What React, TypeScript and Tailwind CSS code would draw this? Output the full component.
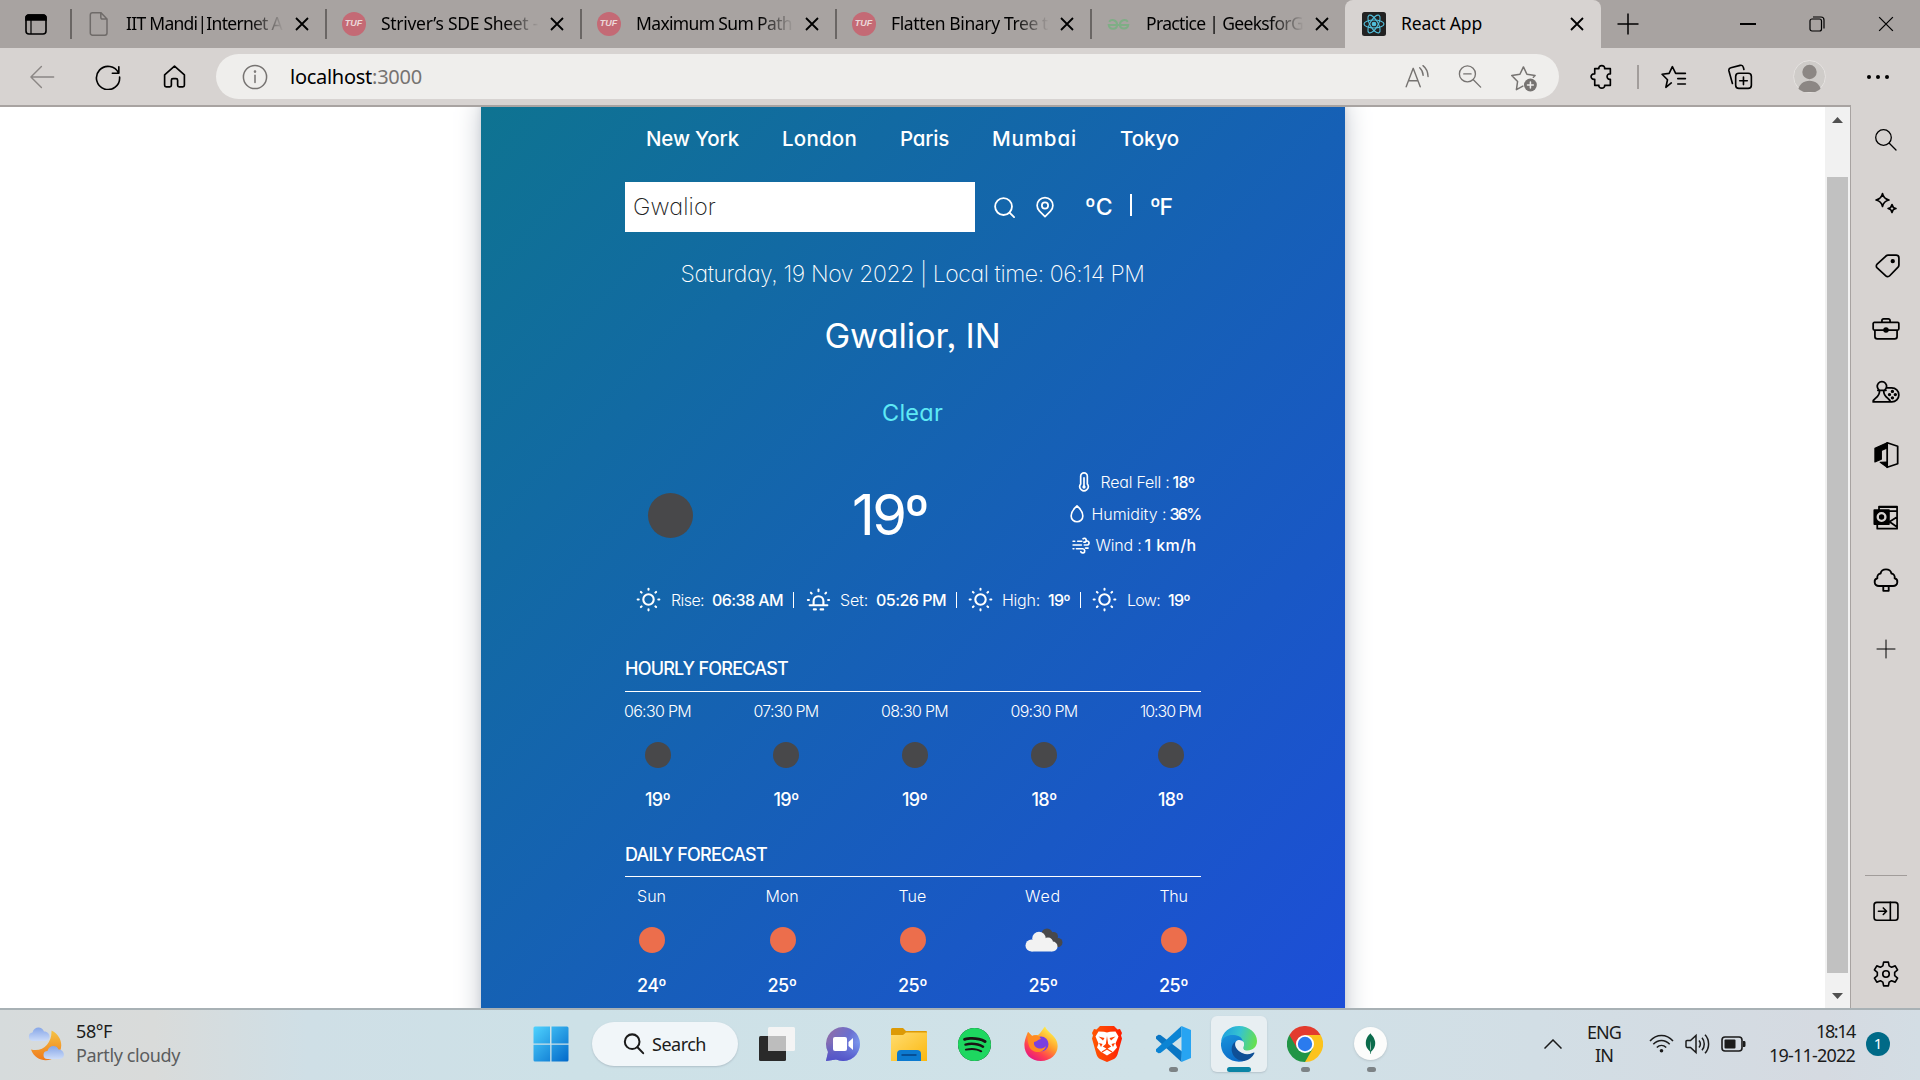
import React, { useLayoutEffect, useRef, useState } from "react";
import { SiSpotify, SiMongodb } from "react-icons/si";

/** Single line of text whose letter spacing is adjusted to fill `w` pixels. */
function Label({ w, className = "", children }: { w: number; className?: string; children: string }) {
  const ref = useRef<HTMLSpanElement>(null);
  const [spacing, setSpacing] = useState(0);
  useLayoutEffect(() => {
    const natural = ref.current!.getBoundingClientRect().width;
    setSpacing((w - natural) / children.length);
  }, [w, children]);
  return (
    <span ref={ref} className={`inline-block shrink-0 whitespace-pre ${className}`} style={{ letterSpacing: `${spacing}px` }}>
      {children}
    </span>
  );
}

type IconProps = { size?: number; className?: string; sw?: number; children: React.ReactNode };
function Icon({ size = 24, className = "", sw = 1.4, children }: IconProps) {
  return (
    <svg width={size} height={size} viewBox="0 0 24 24" fill="none" stroke="currentColor" strokeWidth={sw} strokeLinecap="round" strokeLinejoin="round" className={`shrink-0 ${className}`}>
      {children}
    </svg>
  );
}

/* ---------- browser tabs ---------- */

const Cross = ({ size = 14, sw = 1.8 }: { size?: number; sw?: number }) => (
  <svg width={size} height={size} viewBox="0 0 14 14" stroke="currentColor" strokeWidth={sw} className="shrink-0">
    <path d="M1 1l12 12M13 1L1 13" />
  </svg>
);

const TufIcon = () => (
  <span className="-ml-[5px] flex h-6 w-6 items-center justify-center rounded-full bg-[#c46a75] font-['Liberation_Sans'] text-[9px] font-bold italic text-[#ecd8d9]">TUF</span>
);

const FileIcon = () => (
  <svg width="20" height="24" viewBox="0 0 20 24" fill="none" stroke="#6f6b69" strokeWidth="1.5" className="-ml-[5px]">
    <path d="M3.500.8h8.500l6 6.200v14a2.200 2.200 0 0 1-2.200 2.200H3.500A2.200 2.200 0 0 1 1.300 21V3A2.200 2.200 0 0 1 3.500.8zM11.800.8v4.400a1.800 1.800 0 0 0 1.800 1.800H18" />
  </svg>
);

const GfgIcon = () => (
  <svg width="23" height="13" viewBox="0 0 24 14" fill="none" stroke="#7fae86" strokeWidth="2.200" className="-ml-[5px]">
    <path d="M2 4C4 1 10.500 1.500 10.500 7.300c0 5.500-8.300 6-9 .2H22.500c-.7 5.300-9 5-9-.2C13.500 1.500 20 1 22 4" />
  </svg>
);

const ReactIcon = () => (
  <svg width="24" height="24" viewBox="0 0 24 24" fill="none" stroke="#53c1de" strokeWidth="1.1">
    <rect width="24" height="24" rx="2.500" fill="#222" stroke="none" />
    <circle cx="12" cy="12" r="1.800" fill="#53c1de" />
    <ellipse cx="12" cy="12" rx="10" ry="4" />
    <ellipse cx="12" cy="12" rx="10" ry="4" transform="rotate(60 12 12)" />
    <ellipse cx="12" cy="12" rx="10" ry="4" transform="rotate(120 12 12)" />
  </svg>
);

const tabs = [
  { icon: <FileIcon />, title: "IIT Mandi|Internet A", w: 156 },
  { icon: <TufIcon />, title: "Striver’s SDE Sheet -", w: 157 },
  { icon: <TufIcon />, title: "Maximum Sum Path", w: 156 },
  { icon: <TufIcon />, title: "Flatten Binary Tree t", w: 157 },
  { icon: <GfgIcon />, title: "Practice | GeeksforG", w: 157 },
];

function TabBar() {
  return (
    <div className="flex h-12 items-center bg-[#a8a3a1] text-[17.500px] text-black">
      <div className="flex w-[70px] justify-center pl-[2px]">
        <svg width="22" height="21" viewBox="0 0 22 21" fill="none" stroke="#000" strokeWidth="1.600">
          <rect x="1" y="1" width="20" height="19" rx="3" />
          <path d="M1 3.500A2.500 2.500 0 0 1 3.500 1h15A2.500 2.500 0 0 1 21 3.500V6H1z" fill="#000" />
          <path d="M6 6v14" strokeWidth="1.200" />
        </svg>
      </div>
      {tabs.map((t, i) => (
        <div key={i} className="flex h-[30px] w-[255px] shrink-0 items-center border-l-2 border-[#6a6664]">
          <div className="ml-[14px] flex w-[30px] justify-center">{t.icon}</div>
          <div className="-mt-px ml-[10px] w-[158px] overflow-hidden [mask-image:linear-gradient(90deg,#000_78%,transparent)]">
            <Label w={t.w}>{t.title}</Label>
          </div>
          <div className="ml-[11px] flex"><Cross /></div>
        </div>
      ))}
      <div className="flex h-12 w-[256px] shrink-0 items-center rounded-t-lg bg-[#d7d3d1]">
        <div className="ml-[17px]"><ReactIcon /></div>
        <div className="-mt-px ml-[15px] w-[169px]"><Label w={81}>React App</Label></div>
        <Cross />
      </div>
      <div className="ml-4 flex">
        <svg width="22" height="22" viewBox="0 0 22 22" stroke="#000" strokeWidth="1.500"><path d="M11 .5v21M.5 11h21" /></svg>
      </div>
      <div className="ml-auto flex items-center">
        <div className="flex w-[69px] justify-center"><span className="h-[1.500px] w-4 bg-black" /></div>
        <div className="flex w-[69px] justify-center">
          <svg width="16" height="16" viewBox="0 0 16 16" fill="none" stroke="#000" strokeWidth="1.200">
            <rect x="1" y="3" width="11.500" height="12" rx="2" />
            <path d="M4 1h8a3 3 0 0 1 3 3v8.500" />
          </svg>
        </div>
        <div className="flex w-[69px] justify-center"><Cross size={16} sw={1.100} /></div>
      </div>
    </div>
  );
}

/* ---------- address bar ---------- */

function Toolbar() {
  return (
    <div className="flex h-[57px] items-center bg-[#d7d3d1] text-black">
      <div className="flex w-[84px] justify-center">
        <Icon size={28} sw={1.200} className="text-[#8b8785]"><path d="M22 12H2.500M11.500 3L2.500 12l9 9" /></Icon>
      </div>
      <div className="flex w-12 justify-center">
        <Icon size={26} sw={1.500}><path d="M21.800 8.500A10.700 10.700 0 1 0 22.700 12M22 2.500v6h-6" /></Icon>
      </div>
      <div className="ml-[18px] flex w-12 justify-center">
        <Icon size={25} sw={1.600}><path d="M2.500 10.500L12 2l9.500 8.500v10a1.500 1.500 0 0 1-1.500 1.500h-3.500a1.500 1.500 0 0 1-1.500-1.500V15.500a1.500 1.500 0 0 0-1.500-1.500h-3A1.500 1.500 0 0 0 9 15.500v5A1.500 1.500 0 0 1 7.500 22H4a1.500 1.500 0 0 1-1.500-1.500z" /></Icon>
      </div>
      <div className="ml-[18px] flex h-[45px] w-[1343px] shrink-0 items-center rounded-full bg-[#efeeec] text-[#767371]">
        <Icon size={26} sw={1.400} className="ml-[26px]"><circle cx="12" cy="12" r="10.700" /><path d="M12 10.500v6.500" /><circle cx="12" cy="7" r=".5" /></Icon>
        <div className="ml-[22px] flex text-[20px]">
          <Label w={82} className="text-black">localhost</Label>
          <Label w={50}>:3000</Label>
        </div>
        <Icon size={26} sw={1.300} className="ml-auto"><path d="M2 21L8.500 4 15 21M4.200 15.500h8.600M14.500 3.500c2 1.800 3 4 3.200 7M17.500 1.500c3 2.300 4.500 5.500 4.700 10" /></Icon>
        <Icon size={25} sw={1.300} className="ml-[27px]"><circle cx="10" cy="9.500" r="7.700" /><path d="M15.700 15.200l7 7M6.500 9.500h7" /></Icon>
        <Icon size={28} sw={1.300} className="ml-7 mr-[21px] mt-[2px]">
          <path d="M11 19l-5.500 3L6.500 15 1.500 9.800l7-1L11.500 2.500l3 6.300 7 1-1.500 1.500" />
          <circle cx="17.500" cy="18" r="5.500" fill="currentColor" stroke="none" />
          <path d="M17.500 15.500v5M15 18h5" stroke="#efeeec" />
        </Icon>
      </div>
      <div className="flex w-[78px] justify-center pl-[7px]">
        <Icon size={25} sw={1.600}><path d="M5.500 4.500h4c-.8-4 6.300-4 5.500 0h5.500v5c-4.200-.8-4.200 6 0 5.200v5.800H15c.8 3.500-6.300 3.500-5.500 0h-4v-5.800c-4.700.8-4.700-6 0-5.200z" /></Icon>
      </div>
      <span className="h-6 w-[2px] bg-[#a29d9b]" />
      <div className="flex w-[70px] justify-center">
        <Icon size={26} sw={1.500}><path d="M9.500 17.500L4.500 21.500 6 14.500 1 9.500l6.500-.8L10.500 2.500l3 6.200h9M15.500 13.500h7M15.500 18.500h7" /></Icon>
      </div>
      <div className="flex w-[66px] justify-center pr-[5px]">
        <Icon size={26} sw={1.500}><rect x="8" y="8.500" width="14.500" height="14" rx="3" /><path d="M15.200 12v7M11.700 15.500h7M5 18L1.800 6.500a2.500 2.500 0 0 1 1.800-3l8.500-2.200a2.500 2.500 0 0 1 3 1.800l.5 2" /></Icon>
      </div>
      <div className="flex w-[69px] justify-center pr-px">
        <svg width="33" height="33" viewBox="0 0 33 33" className="overflow-hidden rounded-full">
          <circle cx="16.500" cy="16.500" r="16" fill="#cfccc9" stroke="#e6e3e1" />
          <circle cx="16.500" cy="12" r="7.200" fill="#8c8784" />
          <path d="M5 32c0-15 23-15 23 0z" fill="#8c8784" />
        </svg>
      </div>
      <div className="flex w-[69px] justify-center gap-1 pr-px">
        <span className="h-1 w-1 rounded-full bg-black" />
        <span className="ml-px h-1 w-1 rounded-full bg-black" />
        <span className="ml-px h-1 w-1 rounded-full bg-black" />
      </div>
    </div>
  );
}

/* ---------- weather card ---------- */

const Sun = () => (
  <Icon size={25} sw={2} className="text-white">
    <circle cx="12" cy="12" r="5" />
    <path d="M12 1.600v1M12 21.400v1M1.600 12h1M21.400 12h1M4.700 4.700l.7.7M18.600 18.600l.7.7M4.700 19.300l.7-.7M18.600 5.400l.7-.7" />
  </Icon>
);

const Sunset = () => (
  <Icon size={25} sw={2} className="text-white">
    <path d="M7.300 17v-3.500a4.700 4.700 0 0 1 9.400 0V17M3.500 17.500h17M7.500 21.500h2M14 21.500h2.500M12 2.500v1.500M1.800 12.500h1M21.200 12.500h1M4.700 5.500l.7.7M18.600 6.200l.7-.7" />
  </Icon>
);

const Dot = ({ color, className }: { color: string; className: string }) => <span className={`rounded-full ${color} ${className}`} />;

/* White cloud in front of a smaller dark one. */
const Clouds = () => (
  <svg width="38" height="24" viewBox="0 0 38 24">
    <g fill="#48484a">
      <circle cx="22" cy="6" r="5.500" /><circle cx="28.500" cy="8.500" r="4.500" /><circle cx="33" cy="14.500" r="4.500" /><path d="M20 8h11l3 11h-8z" />
    </g>
    <g fill="#f2f2f2">
      <circle cx="14" cy="10.500" r="6.800" /><circle cx="6.500" cy="17.500" r="6" /><circle cx="23" cy="14.500" r="5" /><circle cx="27.500" cy="18.500" r="5" /><path d="M8 12h16l3 11.500H6.500z" />
    </g>
  </svg>
);

const Row = ({ className = "", children }: { className?: string; children: React.ReactNode }) => (
  <div className={`flex shrink-0 items-center ${className}`}>{children}</div>
);

const cities: [string, number][] = [["New York", 93], ["London", 75], ["Paris", 49], ["Mumbai", 85], ["Tokyo", 59]];

const hours: [string, number, string][] = [
  ["06:30 PM", 67, "19º"], ["07:30 PM", 65, "19º"], ["08:30 PM", 67, "19º"], ["09:30 PM", 67, "18º"], ["10:30 PM", 61, "18º"],
];

const days: [string, number, string][] = [["Sun", 29, "24º"], ["Mon", 33, "25º"], ["Tue", 28, "25º"], ["Wed", 36, "25º"], ["Thu", 28, "25º"]];

function WeatherCard() {
  return (
    <div className="-mt-[33px] ml-[481px] flex h-[945px] w-[864px] shrink-0 flex-col bg-[linear-gradient(to_bottom_right,#0e7490,#1d4ed8)] px-36 pt-[45px] font-['Inter',sans-serif] text-white shadow-[0_22px_28px_-6px_#9ca3af,0_9px_11px_-7px_#9ca3af] [font-feature-settings:'cv11','ss03']">
      <Row className="h-10 gap-[43px] pl-[21px] text-[20.500px] font-medium">
        {cities.map(([c, w]) => <Label key={c} w={w}>{c}</Label>)}
      </Row>

      <Row className="mt-[23px] h-[50px]">
        <div className="flex h-[50px] w-[350px] items-center bg-white pb-px pl-2 text-[23.500px] font-extralight text-[#222]">
          <Label w={83}>Gwalior</Label>
        </div>
        <Icon size={23} sw={1.900} className="ml-[18px]"><circle cx="11" cy="11" r="8.800" /><path d="M17.500 17.500L22 22" /></Icon>
        <Icon size={22} sw={1.900} className="ml-[18px]"><path d="M12 22.500l-6-6a8.600 8.600 0 1 1 12 0z" /><circle cx="12" cy="10.300" r="3.400" /></Icon>
        <Row className="ml-[29px] text-[23px] font-medium">
          <Label w={28}>ºC</Label>
          <span className="-mt-1 ml-[17px] h-[22px] w-[2px] bg-white" />
          <Label w={22} className="ml-[18px]">ºF</Label>
        </Row>
      </Row>

      <Row className="mt-[22px] h-10 justify-center pr-px text-[23px] font-extralight">
        <Label w={464}>Saturday, 19 Nov 2022 | Local time: 06:14 PM</Label>
      </Row>
      <Row className="mt-[22px] h-10 justify-center pr-px text-[34.500px] font-normal"><Label w={176}>Gwalior, IN</Label></Row>
      <Row className="mt-[37px] h-10 justify-center pr-px text-[23.500px] font-normal text-[#5ee9f5]"><Label w={61}>Clear</Label></Row>

      <Row className="mt-[19px] h-[126px]">
        <Dot color="bg-[#48484a]" className="ml-[23px] h-[45px] w-[45px]" />
        <Label w={75} className="ml-[159px] text-[56px] font-normal">19º</Label>
        <div className="-mt-1 ml-auto flex w-[134px] flex-col items-center pr-px text-[16px] font-light">
          <Row className="h-8 gap-[7px]">
            <Icon size={20} sw={2} className="ml-px"><path d="M8 14.500V5a4 4 0 0 1 8 0v9.500a5 5 0 1 1-8 0zM12 7v10" /><circle cx="12" cy="18" r="1" /></Icon>
            <span className="flex gap-[3px]"><Label w={69}>Real Fell :</Label><Label w={22} className="font-medium">18º</Label></span>
          </Row>
          <Row className="h-8 gap-[5px]">
            <Icon size={20} sw={2}><path d="M12 2.300c4 3.500 7 7.500 7 12a7 7 0 0 1-14 0c0-4.500 3-8.500 7-12z" /></Icon>
            <span className="flex gap-[3px]"><Label w={75}>Humidity :</Label><Label w={31} className="font-medium">36%</Label></span>
          </Row>
          <Row className="h-[31px] gap-[5px]">
            <Icon size={20} sw={2}><path d="M8 7.500h5M2.500 7.500h2M14.500 4.500a2.300 2.300 0 1 1 1 4M2.500 12h10M16 12h3.500a2.400 2.400 0 1 0-2-4M6.500 16.500h7.500a2.500 2.500 0 1 1-2.300 3.500M2.500 16.500h1M17.500 15.700h3" /></Icon>
            <span className="flex gap-[3px]"><Label w={46}>Wind :</Label><Label w={52} className="font-medium">1 km/h</Label></span>
          </Row>
        </div>
      </Row>

      <Row className="mt-[2px] h-10 pb-px pl-[11px] text-[16px] font-light">
        <Sun /><Label w={33} className="ml-[10px]">Rise:</Label><Label w={71} className="ml-2 font-medium">06:38 AM</Label>
        <span className="ml-[10px] h-4 w-px bg-white" />
        <span className="ml-3"><Sunset /></span><Label w={28} className="ml-[9px]">Set:</Label><Label w={70} className="ml-2 font-medium">05:26 PM</Label>
        <span className="ml-[10px] h-4 w-px bg-white" />
        <span className="ml-[11px]"><Sun /></span><Label w={38} className="ml-[9px]">High:</Label><Label w={22} className="ml-2 font-medium">19º</Label>
        <span className="ml-[10px] h-4 w-px bg-white" />
        <span className="ml-[11px]"><Sun /></span><Label w={33} className="ml-[10px]">Low:</Label><Label w={22} className="ml-2 font-medium">19º</Label>
      </Row>

      <Row className="mt-[29px] h-[43px] border-b border-white pb-[3px] text-[18px] font-medium"><Label w={163}>HOURLY FORECAST</Label></Row>
      <div className="-ml-px flex justify-between">
        {hours.map(([t, w, deg]) => (
          <div key={t} className="flex flex-col items-center">
            <Row className="mt-1 h-[30px] text-[16px] font-light"><Label w={w}>{t}</Label></Row>
            <Row className="mt-[14px] h-[30px]"><Dot color="bg-[#48484a]" className="h-[26px] w-[26px]" /></Row>
            <Row className="mt-[14px] h-[30px] text-[18px] font-medium"><Label w={25}>{deg}</Label></Row>
          </div>
        ))}
      </div>

      <Row className="mt-[20px] h-[43px] border-b border-white pb-[2px] text-[18px] font-medium"><Label w={142}>DAILY FORECAST</Label></Row>
      <div className="flex justify-between">
        {days.map(([d, w, deg]) => (
          <div key={d} className="flex w-[54px] flex-col items-center">
            <Row className="mt-1 h-[30px] pr-px text-[16px] font-light"><Label w={w}>{d}</Label></Row>
            <Row className="mt-[14px] h-[30px]">{d === "Wed" ? <Clouds /> : <Dot color="bg-[#ec6e4c]" className="h-[26px] w-[26px]" />}</Row>
            <Row className="mt-[15px] h-[30px] pr-px text-[18px] font-medium"><Label w={29}>{deg}</Label></Row>
          </div>
        ))}
      </div>
    </div>
  );
}

/* ---------- page area ---------- */

function Scrollbar() {
  return (
    <div className="flex w-[25px] shrink-0 flex-col items-center bg-[#f1f1f1]">
      <svg width="11" height="6" viewBox="0 0 11 6" className="mt-[10px] shrink-0"><path d="M0 6l5.500-6L11 6z" fill="#505050" /></svg>
      <div className="mt-[54px] h-[796px] w-[21px] shrink-0 bg-[#c1c1c1]" />
      <svg width="11" height="6" viewBox="0 0 11 6" className="mt-5 shrink-0"><path d="M0 0l5.500 6L11 0z" fill="#505050" /></svg>
    </div>
  );
}

const sideIcons: React.ReactNode[] = [
  <Icon size={24} sw={1.300}><circle cx="9.500" cy="9.500" r="7.800" /><path d="M15.300 15.300L22 22" /></Icon>,
  <Icon size={24} sw={1.600}><path d="M8.500 2.500c.8 4 2.300 5.600 6.500 6.500-4.200.9-5.700 2.500-6.500 6.500C7.700 11.500 6.200 9.900 2 9c4.200-.9 5.700-2.500 6.500-6.500zM18 13.500c.4 2.500 1.500 3.600 4 4-2.500.4-3.600 1.500-4 4-.4-2.500-1.500-3.600-4-4 2.500-.4 3.600-1.500 4-4z" /></Icon>,
  <Icon size={26} sw={1.600} className="ml-[3px]"><path d="M13 2h7.500A2.500 2.500 0 0 1 23 4.500V11c0 .8-.3 1.400-.8 2l-7.700 8a2.500 2.500 0 0 1-3.600.1l-8-7.300a2.500 2.500 0 0 1 0-3.600L11 2.800c.6-.5 1.200-.8 2-.8z" /><circle cx="17.300" cy="7.500" r="1.200" fill="currentColor" /></Icon>,
  <Icon size={28} sw={1.500} className="mt-[3px]"><path d="M8.500 5.500V4A1.500 1.500 0 0 1 10 2.500h4A1.500 1.500 0 0 1 15.500 4v1.500M2 5.500h20a1 1 0 0 1 1 1V11a1 1 0 0 1-1 1H2a1 1 0 0 1-1-1V6.500a1 1 0 0 1 1-1zM2.500 12v5.500a2 2 0 0 0 2 2h15a2 2 0 0 0 2-2V12" /><circle cx="12" cy="12" r="1.600" fill="currentColor" /></Icon>,
  <Icon size={28} sw={1.500} className="mt-px"><path d="M6.300 10.500a4 4 0 1 1 4.400 0M5 10.500h7M6.500 10.800c0 3-.7 4.700-3.500 6.500C1.500 18.300 1 19 1 20.500h14.500c0-1.500-.5-2.200-2-3.200-2.800-1.800-3.500-3.500-3.500-6.500M13 8.500h4a6 6 0 0 1 0 12h-2" /><circle cx="17.500" cy="11.500" r=".7" /><circle cx="17.500" cy="17" r=".7" /><circle cx="15" cy="14.200" r=".7" /><circle cx="20" cy="14.200" r=".7" /></Icon>,
  <Icon size={28} sw={1.500}><path d="M13 1.500l9 3v15l-9 3z" /><path d="M13 1.500v4.500L8 8.200v7.500L2.500 18V6.300zM13 22.500l-6-4.200 6-.3z" fill="currentColor" strokeWidth="1" /></Icon>,
  <Icon size={28} sw={1.500} className="-mt-px"><path d="M6 6V3h15.500v19H4.500v-5M21.500 12L15 16l6.500 4.500M15 7h6M6 3.500h15" /><rect x="2" y="6" width="12.500" height="12" fill="currentColor" /><circle cx="8.200" cy="12" r="3.300" stroke="#d7d3d1" strokeWidth="2" /></Icon>,
  <Icon size={26} sw={1.700} className="-mt-px"><path d="M5.500 17.500C.5 17.500.5 11 4 10.500 3.500 7.500 5.500 6 7 6c1-5 9-5 10 0 1.500 0 3.500 1.500 3 4.500 3.500.5 3.500 7-1.500 7zM9.500 17.500V22h5v-4.500" /></Icon>,
  <Icon size={24} sw={1}><path d="M12 3v18M3 12h18" /></Icon>,
];

function Sidebar() {
  return (
    <div className="flex w-[69px] shrink-0 flex-col items-center bg-[#d7d3d1] pt-[3px] text-black">
      {sideIcons.map((icon, i) => (
        <div key={i} className={`flex h-[63px] shrink-0 items-center justify-center ${i === 8 ? "mt-[5px]" : ""}`}>{icon}</div>
      ))}
      <div className="mt-[195px] h-px w-[42px] shrink-0 bg-[#a19c9a]" />
      <div className="mt-[22px] flex shrink-0">
        <Icon size={26} sw={1.500}><rect x="1" y="4" width="22" height="16.500" rx="2.500" /><path d="M16 4v16.500M5 12.200h7.500M9.500 9.200l3 3-3 3" /></Icon>
      </div>
      <div className="mt-[37px] flex shrink-0">
        <Icon size={26} sw={1.500}><path d="M9.800 1h4.400l.7 3.500 2.200 1.200 3.400-1.200 2.200 3.800-2.700 2.300v2.800l2.700 2.300-2.200 3.800-3.400-1.200-2.200 1.200-.7 3.500H9.800l-.7-3.500-2.200-1.200-3.400 1.200-2.200-3.800L4 13.400v-2.800L1.300 8.300l2.200-3.800 3.400 1.200 2.200-1.200z" /><circle cx="12" cy="12" r="3" /></Icon>
      </div>
    </div>
  );
}

/* ---------- taskbar ---------- */

const WeatherIcon = () => (
  <svg width="37" height="34" viewBox="0 0 37 34">
    <defs>
      <linearGradient id="moon" x1="0" y1="0" x2="0" y2="1"><stop stopColor="#f5c343" /><stop offset="1" stopColor="#ef7a1c" /></linearGradient>
      <linearGradient id="cl" x1="0" y1="0" x2="0" y2="1"><stop stopColor="#86a6e8" /><stop offset="1" stopColor="#ccdcf9" /></linearGradient>
    </defs>
    <path d="M23.500 3.500c11 5.500 13 18.500 4.500 26C20 36 7 34 3 22.500c12 3 21-6 20.500-19z" fill="url(#moon)" />
    <path d="M4.500 14a4.300 4.300 0 0 1 0-8.500C6-.8 14-1.200 16 4.500c7 0 7.500 9.500 1 9.500z" fill="url(#cl)" />
    <path d="M19.500 32a4 4 0 0 1 0-8c1.500-6 9-6.500 11-1.500 6.500 0 7.500 9.500 1 9.500z" fill="url(#cl)" />
  </svg>
);

const WindowsLogo = () => (
  <svg width="36" height="36" viewBox="0 0 36 36">
    <defs><linearGradient id="win" gradientUnits="userSpaceOnUse" x1="0" y1="0" x2="36" y2="36"><stop stopColor="#50d4ff" /><stop offset="1" stopColor="#0067c9" /></linearGradient></defs>
    <path d="M2 .5h15v17H.5V2A1.500 1.500 0 0 1 2 .5zM18.500.5H34A1.500 1.500 0 0 1 35.500 2v15.500h-17zM.5 18.700h16.700v16.800H2A1.500 1.500 0 0 1 .5 34zM18.500 18.700h17V34a1.500 1.500 0 0 1-1.500 1.500H18.500z" fill="url(#win)" />
  </svg>
);

const TaskView = () => (
  <svg width="36" height="34" viewBox="0 0 36 34">
    <rect x="0" y="9" width="27" height="25" rx="1.500" fill="#2a2a2a" />
    <rect x="9" y="0" width="27" height="24" rx="1.500" fill="#f4f4f4" />
    <path d="M9 9h18v15H10a1 1 0 0 1-1-1z" fill="#bdbdbd" />
  </svg>
);

const Chat = () => (
  <svg width="34" height="34" viewBox="0 0 34 34">
    <defs><linearGradient id="chat" x1="0" y1="0" x2="1" y2=".6"><stop offset=".1" stopColor="#8f6da8" /><stop offset=".6" stopColor="#6a6fd0" /><stop offset="1" stopColor="#7da0f5" /></linearGradient>
      <linearGradient id="chat2" x1="0" y1="0" x2="0" y2="1"><stop offset=".45" stopColor="#5252c0" stopOpacity="0" /><stop offset="1" stopColor="#5252c8" /></linearGradient></defs>
    <path d="M17 0a17 17 0 1 1-7 32.500L0 34l2-9A17 17 0 0 1 17 0z" fill="url(#chat)" />
    <path d="M17 0a17 17 0 1 1-7 32.500L0 34l2-9A17 17 0 0 1 17 0z" fill="url(#chat2)" />
    <rect x="7" y="10" width="14" height="14" rx="2" fill="#fff" /><path d="M22.500 15l4.500-4v12l-4.500-4z" fill="#fff" />
  </svg>
);

const Folder = () => (
  <svg width="36" height="33" viewBox="0 0 36 33">
    <defs><linearGradient id="fo" x1="0" y1="0" x2="1" y2="1"><stop stopColor="#ffdc70" /><stop offset="1" stopColor="#fbb80f" /></linearGradient></defs>
    <path d="M0 1.500A1.500 1.500 0 0 1 1.500 0H12l3 3h20a1 1 0 0 1 1 1v6H0z" fill="#dd9a05" />
    <path d="M0 7h12l3-2.500h21V33H0z" fill="url(#fo)" />
    <path d="M6 33v-7a4 4 0 0 1 4-4h16a4 4 0 0 1 4 4v7z" fill="#0c7ad0" /><path d="M10.500 27h15" stroke="#064f96" strokeWidth="2" />
  </svg>
);

const Firefox = () => (
  <svg width="34" height="36" viewBox="0 0 34 36">
    <defs><linearGradient id="ff" x1=".8" y1=".1" x2=".2" y2="1"><stop stopColor="#fff04a" /><stop offset=".4" stopColor="#ff9a2b" /><stop offset=".7" stopColor="#ff4050" /><stop offset="1" stopColor="#e0108c" /></linearGradient></defs>
    <path d="M4 6l4 4c2-1 4-1.200 6-1 2-1 4-5 7-8.500C23 6 31 9 33 16c3 10-5 19-16 19S-.5 27 .5 17C1 13 2.500 9 4 6z" fill="url(#ff)" />
    <circle cx="17" cy="18" r="7.500" fill="#7a3fe0" />
    <path d="M4 6l4 4c3-1.500 7-1 9 3-3 0-4 3-7 3-1 6 7 9 12 4-2 8-14 8-17 0-1.500-5-2-10-1-14z" fill="#ff8a22" />
  </svg>
);

const Brave = () => (
  <svg width="30" height="36" viewBox="0 0 30 36">
    <defs><linearGradient id="br"><stop stopColor="#ff5601" /><stop offset=".6" stopColor="#ff3a05" /><stop offset="1" stopColor="#ff1a00" /></linearGradient></defs>
    <path d="M8 0h14l3.500 3.500L28 3l2 4-1 2.500 1 3-4.500 16c-.8 2.300-2 3.500-3.500 4.500L15 36l-7-3c-1.500-1-2.800-2.500-3.500-4.500L0 12.500l1-3L0 7l2-4 2.500.5z" fill="url(#br)" />
    <path d="M15 6.500l3-.8 5.500-.2 3 5-3 7 1.500 4-3.500 4-6.500 4-6.500-4L5 21.500l1.500-4-3-7 3-5 5.500.2z" fill="#fff" />
    <path d="M6.500 10.500l6 1.500-1.500 2.500zM23.500 10.500l-6 1.500 1.500 2.500zM15 10l1.200 8 3 2.500-4.200 2.500-4.200-2.500 3-2.500zM7 17l3.500 1-1.500 3zM23 17l-3.500 1 1.500 3z" fill="#ff4205" />
    <path d="M15 19v4l-5 3M15 23l5 3" stroke="#ff4205" strokeWidth="1.300" fill="none" />
  </svg>
);

const VSCode = () => (
  <svg width="36" height="36" viewBox="0 0 36 36">
    <path d="M26.500 36L1 12.800 1 10.500 3.500 8.800 5.500 9 27 25.500z" fill="#0a76c4" />
    <path d="M1 23.200L26.500 0v10.500L5.500 27 3.500 27.200 1 25.500z" fill="#0b84d4" />
    <path d="M26.500 0L36 4v28l-9.500 4z" fill="#27a4f2" />
  </svg>
);

const Edge = () => (
  <svg width="36" height="36" viewBox="0 0 36 36">
    <defs>
      <linearGradient id="e1" x1="0" y1=".3" x2="1" y2=".5"><stop stopColor="#1d9fe0" /><stop offset=".5" stopColor="#36c3d0" /><stop offset="1" stopColor="#66e04e" /></linearGradient>
      <linearGradient id="e2" x1="0" y1="0" x2=".4" y2="1"><stop stopColor="#1a94dc" /><stop offset="1" stopColor="#0b6cc8" /></linearGradient>
    </defs>
    <path d="M0 16C1 6 9 0 18 0c10 0 18 7 18 15 0 6-4.500 9.500-9.500 9.500-4 0-5.500-1.500-4.500-3.500 3-4-1-9-8-9-6 0-11 1-14 4z" fill="url(#e1)" />
    <path d="M0 17C2 10 8 8.500 13 9c5 .3 8.500 3 9 7-6 0-8.500 5-6.500 10 2 5 6.500 6.500 9 8.500C12 39-1 30 0 17z" fill="url(#e2)" />
    <path d="M14.500 15.500C9 19 9 29 17 33.500c7 4 14-1 16.500-6.500-.5-.8-1-.5-2 0-8 4-18-2-17-11.500z" fill="#0f4f96" />
    <path d="M22.500 20.500c2-4-1.500-7-5-6.500-4.500 1-4.500 7 0 10.500 4.500 3.500 10 3.500 14.500 1.500-5 .5-11-1-9.500-5.500z" fill="#eaf0f3" />
  </svg>
);

const Chrome = () => (
  <svg width="36" height="36" viewBox="0 0 36 36">
    <path d="M18 18L2.400 9A18 18 0 0 1 33.600 9z" fill="#e33b2e" />
    <path d="M18 18L33.600 9A18 18 0 0 1 18 36z" fill="#fcc31e" />
    <path d="M18 18v18A18 18 0 0 1 2.400 9z" fill="#219546" />
    <path d="M18 9h15.600l-7.800 13.500z" fill="#fcc31e" /><path d="M25.800 22.500L18 36l-7.800-13.500z" fill="#219546" />
    <path d="M2.400 9l7.800 13.500L18 9z" fill="#e33b2e" />
    <circle cx="18" cy="18" r="9" fill="#fff" /><circle cx="18" cy="18" r="7.200" fill="#2b7bee" />
  </svg>
);

const apps: { icon: React.ReactNode; state?: "running" | "active" }[] = [
  { icon: <TaskView /> },
  { icon: <Chat /> },
  { icon: <Folder /> },
  { icon: <span className="mr-px rounded-full bg-[#191414]"><SiSpotify size={33} color="#1ed760" /></span> },
  { icon: <Firefox /> },
  { icon: <Brave /> },
  { icon: <VSCode />, state: "running" },
  { icon: <Edge />, state: "active" },
  { icon: <Chrome />, state: "running" },
  { icon: <span className="mr-px flex h-[33px] w-[33px] items-center justify-center rounded-full bg-[#fcfcfb] shadow-sm"><SiMongodb size={21} color="#0b6b4b" /></span>, state: "running" },
];

function Taskbar() {
  return (
    <div className="flex h-[72px] items-start border-t-2 border-[#a8b1b5] bg-[linear-gradient(90deg,#d6dbdc_0%,#d9dbda_8%,#cfdfe6_16%,#cde1e7_30%,#d0e2e8_60%,#d2dee5_80%,#d5dae1_95%,#d3dde4_100%)] text-[18px] text-[#1b1b1b]">
      <div className="flex h-[67px] w-[518px] items-center pl-[28px]">
        <WeatherIcon />
        <div className="ml-[11px] flex flex-col items-start pb-px leading-6">
          <Label w={36}>58°F</Label>
          <Label w={104} className="text-[#5b5d5e]">Partly cloudy</Label>
        </div>
      </div>
      <div className="flex h-[68px] w-[66px] items-center justify-center"><WindowsLogo /></div>
      <div className="ml-2 mr-1.5 mt-3 flex h-11 w-[146px] items-center rounded-full bg-[#f1f6f9] pl-[31px] shadow-[0_1px_2px_#aebfc8]">
        <Icon size={22} sw={2.200}><circle cx="10" cy="9.500" r="8" /><path d="M15.800 15.500L22 22" /></Icon>
        <Label w={54} className="ml-[7px]">Search</Label>
      </div>
      {apps.map((a, i) => (
        <div key={i} className="flex w-[66px] justify-center pt-[6px]">
          <div className={`flex h-14 w-14 flex-col items-center rounded-md ${a.state === "active" ? "bg-[#e8eff2] shadow-[0_1px_2px_#b4c2ca]" : ""}`}>
            <div className="flex h-[52px] items-center pt-1">{a.icon}</div>
            {a.state && <span className={`h-[5px] shrink-0 rounded-full ${a.state === "active" ? "w-6 bg-[#0a84a5]" : "w-[9px] bg-[#7d8386]"}`} />}
          </div>
        </div>
      ))}
      <div className="ml-auto flex h-[67px] items-center">
        <svg width="18" height="10" viewBox="0 0 18 10" fill="none" stroke="#1b1b1b" strokeWidth="1.500"><path d="M.5 9.500L9 1l8.500 8.500" /></svg>
        <div className="ml-[25px] flex flex-col items-center leading-[23px]"><Label w={34}>ENG</Label><Label w={18}>IN</Label></div>
        <svg width="25" height="20" viewBox="0 0 25 20" fill="none" stroke="#1b1b1b" strokeWidth="1.500" className="ml-[28px]">
          <path d="M1 7C7.500-.5 17.500-.5 24 7M4.300 10.300c4.700-5 11.700-5 16.400 0M7.800 13.500c2.800-2.800 6.600-2.800 9.400 0" /><circle cx="12.500" cy="16.800" r="1.800" fill="#1b1b1b" stroke="none" />
        </svg>
        <svg width="25" height="22" viewBox="0 0 25 22" fill="none" stroke="#1b1b1b" strokeWidth="1.500" className="ml-[11px]">
          <path d="M1 8.500A1 1 0 0 1 2 7.500h3.500L11 2.500v17l-5.500-5H2a1 1 0 0 1-1-1zM14 7.500c1.600 2 1.600 5 0 7M17 4.700c3 3.500 3 9 0 12.500M20 1.700c4.800 5 4.800 13.500 0 18.500" />
        </svg>
        <svg width="25" height="16" viewBox="0 0 25 16" className="ml-[11px]">
          <rect x="1" y="1" width="20" height="14" rx="3" fill="none" stroke="#1b1b1b" strokeWidth="1.600" /><rect x="3.500" y="3.500" width="11" height="9" rx="1" fill="#1b1b1b" /><path d="M22 5h1.500a1.500 1.500 0 0 1 1 1.500v3a1.500 1.500 0 0 1-1 1.500H22z" fill="#1b1b1b" />
        </svg>
        <div className="ml-[23px] flex flex-col items-end pb-px leading-6"><Label w={39}>18:14</Label><Label w={86}>19-11-2022</Label></div>
        <span className="ml-[11px] mr-[30px] flex h-6 w-6 items-center justify-center rounded-full bg-[#006a87] text-[15px] text-white">1</span>
      </div>
    </div>
  );
}

export default function App() {
  return (
    <div className="flex h-[1080px] w-[1920px] flex-col overflow-hidden bg-white font-['Noto_Sans',sans-serif]">
      <TabBar />
      <Toolbar />
      <div className="flex h-[903px] shrink-0 bg-[#d7d3d1]">
        <div className="flex w-[1851px] shrink-0 border-r border-t-2 border-[#a8a3a1] bg-white">
          <div className="flex flex-1 items-start overflow-hidden"><WeatherCard /></div>
          <Scrollbar />
        </div>
        <Sidebar />
      </div>
      <Taskbar />
    </div>
  );
}
